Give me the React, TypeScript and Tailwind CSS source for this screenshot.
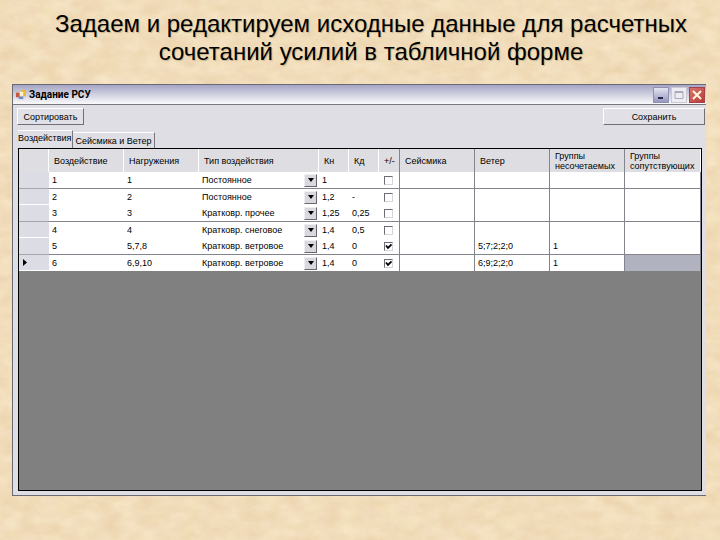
import { clsx } from "clsx";

interface LoadRow {
  id: string;
  loads: string;
  type: string;
  kn: string;
  kd: string;
  sign: boolean;
  wind: string;
  exclusive: string;
}

const TYPES = ["Постоянное", "Кратковр. прочее", "Кратковр. снеговое", "Кратковр. ветровое"];

const ROWS: LoadRow[] = [
  { id: "1", loads: "1", type: TYPES[0], kn: "1", kd: "", sign: false, wind: "", exclusive: "" },
  { id: "2", loads: "2", type: TYPES[0], kn: "1,2", kd: "-", sign: false, wind: "", exclusive: "" },
  { id: "3", loads: "3", type: TYPES[1], kn: "1,25", kd: "0,25", sign: false, wind: "", exclusive: "" },
  { id: "4", loads: "4", type: TYPES[2], kn: "1,4", kd: "0,5", sign: false, wind: "", exclusive: "" },
  { id: "5", loads: "5,7,8", type: TYPES[3], kn: "1,4", kd: "0", sign: true, wind: "5;7;2;2;0", exclusive: "1" },
  { id: "6", loads: "6,9,10", type: TYPES[3], kn: "1,4", kd: "0", sign: true, wind: "6;9;2;2;0", exclusive: "1" },
];

const COLUMNS = [
  { title: "Воздействие", width: "w-[75px]" },
  { title: "Нагружения", width: "w-[75px]" },
  { title: "Тип воздействия", width: "w-[120px]" },
  { title: "Кн", width: "w-[30px]" },
  { title: "Кд", width: "w-[30px]" },
  { title: "+/-", width: "w-[21px]" },
  { title: "Сейсмика", width: "w-[75px]", ruled: true },
  { title: "Ветер", width: "w-[75px]", ruled: true },
  { title: "Группы несочетаемых", width: "w-[75px]", ruled: true },
  { title: "Группы сопутствующих", width: "", ruled: true },
];

function Parchment() {
  return (
    <svg className="absolute inset-0 -z-10 h-full w-full" aria-hidden="true">
      <filter id="grain" x="0" y="0" width="100%" height="100%" colorInterpolationFilters="sRGB">
        <feTurbulence type="fractalNoise" baseFrequency="0.05 0.08" numOctaves="5" seed="12" />
        <feColorMatrix
          values="0.04 0.03 0 0 0.91
                  0.08 0.04 0 0 0.805
                  0.08 0.09 0 0 0.645
                  0 0 0 0 1"
        />
      </filter>
      <rect width="100%" height="100%" filter="url(#grain)" />
    </svg>
  );
}

function FormIcon() {
  return (
    <svg width="10" height="10" viewBox="0 0 11 11" aria-hidden="true">
      <rect x="5" y="0" width="6" height="7" fill="#e8b93c" />
      <rect x="0" y="3" width="5" height="5" fill="#c9553c" />
      <rect x="3" y="6" width="5" height="4" fill="#6f86c8" />
      <rect x="4" y="2" width="4" height="5" fill="#fbf3c5" />
    </svg>
  );
}

function TitleBar() {
  return (
    <div className="flex h-5 items-center border-b border-[#77777f] bg-linear-to-b from-[#a5a5c5] via-[#d0d0df] to-[#fafafc] pr-px pl-[3px]">
      <FormIcon />
      <h2 className="ml-[3px] flex-1 font-[Roboto,sans-serif] text-[10px] font-bold">Задание РСУ</h2>
      <div className="flex gap-0.5">
        <button type="button" aria-label="Свернуть" className="h-4 w-4 border border-[#8f90b4] bg-linear-to-b from-[#e4e4f0] to-[#9698bc]">
          <svg viewBox="0 0 14 14" className="block" aria-hidden="true">
            <path d="M4 10h5" stroke="#24264c" strokeWidth="2" />
          </svg>
        </button>
        <button type="button" aria-label="Развернуть" className="h-4 w-4 border border-[#c9c9d6] bg-[#ececf2]">
          <svg viewBox="0 0 14 14" className="block" aria-hidden="true">
            <path d="M3 3.5h8v7H3zM3 4.5h8" fill="none" stroke="#aaaabc" />
          </svg>
        </button>
        <button type="button" aria-label="Закрыть" className="h-4 w-4 border border-[#a84049] bg-linear-to-br from-[#d5746f] to-[#b93a3a]">
          <svg viewBox="0 0 14 14" className="block" aria-hidden="true">
            <path d="M3 3l8 8M11 3l-8 8" stroke="#fff6dc" strokeWidth="2" />
          </svg>
        </button>
      </div>
    </div>
  );
}

function ToolButton({ label, className }: { label: string; className: string }) {
  return (
    <button
      type="button"
      className={clsx("h-[17px] border border-t-white border-r-[#6f6f78] border-b-[#6f6f78] border-l-white bg-[#e0e0e6]", className)}
    >
      {label}
    </button>
  );
}

function TypeSelect({ row }: { row: LoadRow }) {
  return (
    <div className="relative flex h-full items-center">
      <select
        aria-label={`Тип воздействия ${row.id}`}
        defaultValue={row.type}
        className="h-full w-full appearance-none bg-transparent pr-4 pl-[3px]"
      >
        {TYPES.map((type) => (
          <option key={type}>{type}</option>
        ))}
      </select>
      <span className="pointer-events-none absolute right-0.5 flex h-[13px] w-[13px] items-center justify-center border border-t-[#efeff2] border-r-[#66666e] border-b-[#66666e] border-l-[#efeff2] bg-[#d8d8de]">
        <svg width="6" height="4" viewBox="0 0 6 4" aria-hidden="true">
          <path d="M0 0h6L3 4z" fill="#000" />
        </svg>
      </span>
    </div>
  );
}

function SignBox({ row }: { row: LoadRow }) {
  return (
    <label className="relative flex items-center justify-center pr-0.5">
      <input
        type="checkbox"
        defaultChecked={row.sign}
        aria-label={`+/- ${row.id}`}
        className="peer h-[9px] w-[9px] appearance-none border border-t-[#6c6c74] border-r-[#d4d4da] border-b-[#d4d4da] border-l-[#6c6c74] bg-white"
      />
      <svg width="7" height="7" viewBox="0 0 7 7" className="invisible absolute peer-checked:visible" aria-hidden="true">
        <path d="M1 2.5L3 5L6.5 1.5" fill="none" stroke="#000" strokeWidth="1.8" />
      </svg>
    </label>
  );
}

function LoadTable() {
  return (
    <table className="w-full table-fixed border-separate border-spacing-0 bg-white text-left">
      <thead>
        <tr className="h-[23px] bg-[#dedee2]">
          <th className="w-[30px] border-r border-r-white p-0" aria-label="Строка" />
          {COLUMNS.map((col, i) => (
            <th
              key={col.title}
              className={clsx(
                "overflow-hidden border-r py-0 pr-0 pl-[5px] leading-[10px] font-normal",
                col.width,
                COLUMNS[i + 1]?.ruled ? "border-[#84848c]" : "border-white",
              )}
            >
              {col.title}
            </th>
          ))}
        </tr>
      </thead>
      <tbody>
        {ROWS.map((row, i) => {
          // every second row carries the rule below it
          const ruled = i % 2 === 0;
          const cell = clsx("border-[#84848c] py-0 pr-0 pl-[3px]", ruled && "border-b");
          const current = i === ROWS.length - 1;
          return (
            <tr key={row.id} className={ruled ? "h-[17px]" : "h-4"}>
              <th className={clsx("border-b bg-[#dcdce4] p-0 pl-1", ruled ? "border-[#a4a4ac]" : "border-white")}>
                {current && (
                  <svg width="4" height="7" viewBox="0 0 4 7" aria-label="Текущая строка">
                    <path d="M0 0L4 3.5L0 7z" fill="#000" />
                  </svg>
                )}
              </th>
              <td className={cell}>{row.id}</td>
              <td className={cell}>{row.loads}</td>
              <td className={clsx("h-4 border-[#84848c] p-0", ruled && "border-b")}>
                <TypeSelect row={row} />
              </td>
              <td className={cell}>{row.kn}</td>
              <td className={cell}>{row.kd}</td>
              <td className={clsx("border-r border-[#84848c] p-0", ruled && "border-b")}>
                <SignBox row={row} />
              </td>
              <td className={clsx(cell, "border-r")} />
              <td className={clsx(cell, "border-r")}>{row.wind}</td>
              <td className={clsx(cell, "border-r")}>{row.exclusive}</td>
              <td className={clsx(cell, "border-r", current && "bg-[#b0b2c0]")} />
            </tr>
          );
        })}
      </tbody>
    </table>
  );
}

export default function App() {
  return (
    <main className="relative isolate flex min-h-screen flex-col overflow-hidden bg-[#f0dcb4] pr-[14px] pb-11 pl-3 font-['Liberation_Sans',Arial,sans-serif] text-black">
      <Parchment />
      <h1 className="pt-[10px] pb-[18px] pl-6 text-center text-[24px] leading-7 [text-shadow:1px_1px_1px_#c4b48c]">
        Задаем и редактируем исходные данные для расчетных
        <br />
        сочетаний усилий в табличной форме
      </h1>
      <section className="flex flex-1 flex-col border-y border-l border-[#6a6a74] bg-[#dedee4] text-[9px] leading-3">
        <TitleBar />
        <div className="flex justify-between pt-[3px] pr-px pl-1">
          <ToolButton label="Сортировать" className="w-[67px]" />
          <ToolButton label="Сохранить" className="w-[102px]" />
        </div>
        <div role="tablist" className="mt-[5px] flex items-end pl-[5px]">
          <button type="button" role="tab" aria-selected="true" className="h-[18px] border-t border-r border-t-white border-r-[#77777f] pr-px pb-1">
            Воздействия
          </button>
          <button type="button" role="tab" aria-selected="false" className="h-4 border-t border-r border-t-white border-r-[#77777f] px-0.5">
            Сейсмика и Ветер
          </button>
        </div>
        <div className="mr-1 mb-1 ml-[5px] flex-1 border border-black bg-[#808080]">
          <LoadTable />
        </div>
      </section>
    </main>
  );
}
